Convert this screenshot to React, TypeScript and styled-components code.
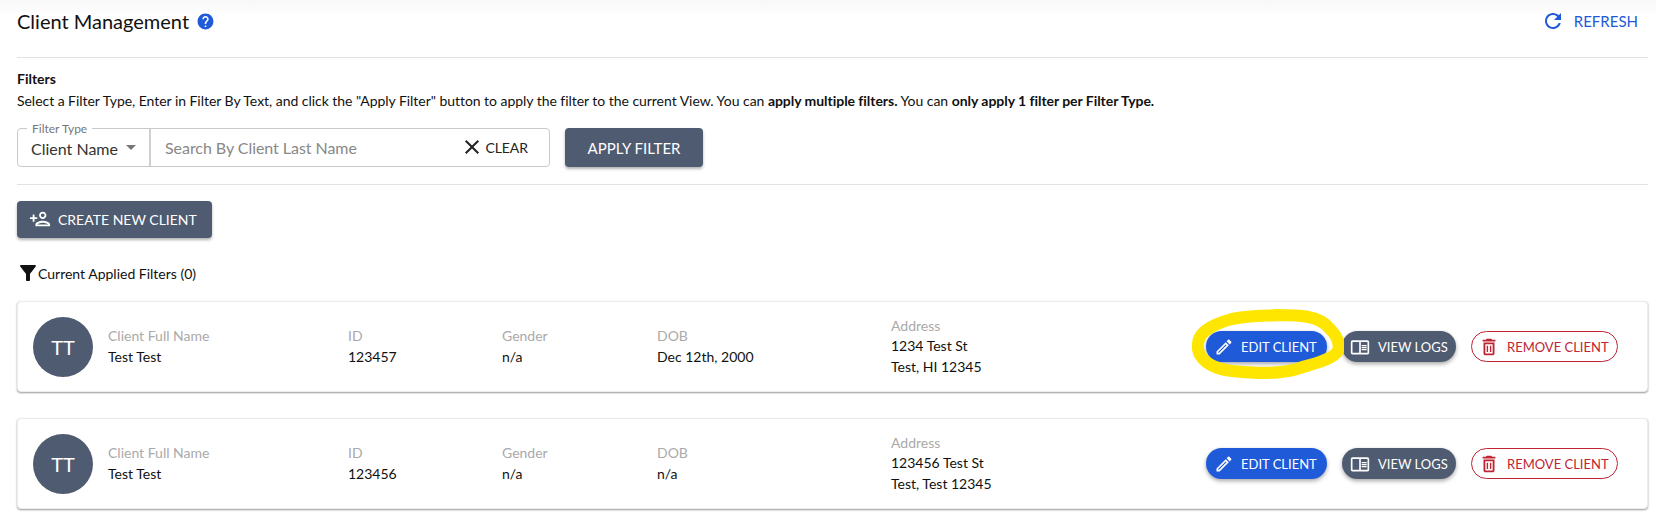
import React from "react"
import styled, { createGlobalStyle, css } from "styled-components"

const DARK = "#4f5b70"
const BLUE = "#1f5ad8"
const RED = "#bf2433"

const GlobalStyle = createGlobalStyle`
  html, body {
    margin: 0;
    padding: 0;
    background: #fff;
  }
  body {
    font-family: "Lato", "Liberation Sans", sans-serif;
    color: #111;
    overflow: hidden;
  }
  * {
    box-sizing: border-box;
  }
`

const Page = styled.div`
  width: 1656px;
  height: 528px;
  padding: 0 8px 0 17px;
  overflow: hidden;
  background: linear-gradient(#f8f8f8 0, #fbfbfb 8px, #fff 14px);
`

const Header = styled.header`
  height: 58px;
  padding-bottom: 15px;
  display: flex;
  align-items: center;
  justify-content: space-between;
  border-bottom: 1px solid #e2e2e2;
`

const TitleRow = styled.div`
  display: flex;
  align-items: center;
  gap: 7px;
  color: ${BLUE};
`

const Title = styled.h1`
  margin: 0;
  font-size: 20px;
  font-weight: 400;
  line-height: 26px;
  color: #111;
`

const RefreshButton = styled.button`
  display: flex;
  align-items: center;
  gap: 9px;
  padding: 0 10px 0 0;
  border: none;
  background: none;
  font: inherit;
  font-size: 15px;
  color: ${BLUE};
`

const Icon = styled.svg<{ $size?: number; $flip?: boolean }>`
  width: ${(p) => p.$size ?? 18}px;
  height: ${(p) => p.$size ?? 18}px;
  flex: none;
  fill: currentColor;
  ${(p) => p.$flip && "transform: scaleX(-1);"}
`

const FilterSection = styled.section`
  height: 127px;
  padding-top: 12px;
  border-bottom: 1px solid #e2e2e2;
`

const SectionTitle = styled.h2`
  margin: 0;
  font-size: 14px;
  font-weight: 700;
  line-height: 18px;
`

const Description = styled.p`
  margin: 4px 0 0;
  font-size: 14px;
  line-height: 18px;
  letter-spacing: -0.04px;
  white-space: nowrap;
  b {
    font-weight: 700;
  }
`

const FilterRow = styled.div`
  display: flex;
  gap: 15px;
  margin-top: 18px;
`

const FilterBox = styled.div`
  position: relative;
  display: flex;
  width: 533px;
  height: 39px;
  border: 1px solid #c9c9c9;
  border-radius: 4px;
`

const FilterLegend = styled.span`
  position: absolute;
  top: -7px;
  left: 9px;
  padding: 0 5px;
  background: #fff;
  font-size: 12px;
  line-height: 13px;
  color: #777;
`

const SelectField = styled.div`
  display: flex;
  align-items: center;
  gap: 8px;
  width: 133px;
  padding: 2px 0 0 13px;
  border-right: 2px solid #d0d0d0;
  font-size: 16px;
  color: #333;
`

const Caret = styled.span`
  width: 0;
  height: 0;
  margin-top: -2px;
  border-left: 5px solid transparent;
  border-right: 5px solid transparent;
  border-top: 5px solid #777;
`

const SearchField = styled.div`
  flex: 1;
  display: flex;
  align-items: center;
  justify-content: space-between;
  padding: 0 21px 1px 14px;
  font-size: 16px;
  letter-spacing: -0.05px;
  color: #888;
`

const ClearButton = styled.span`
  display: flex;
  align-items: center;
  gap: 1px;
  font-size: 14px;
  color: #222;
`

const SquareButton = styled.button`
  display: flex;
  align-items: center;
  justify-content: center;
  width: 138px;
  height: 39px;
  padding: 0;
  border: none;
  border-radius: 4px;
  background: ${DARK};
  color: #fff;
  font: inherit;
  font-size: 15px;
  box-shadow: 0 2px 3px rgba(0, 0, 0, 0.3);
`

const CreateButton = styled(SquareButton)`
  gap: 7px;
  width: 195px;
  height: 37px;
  padding: 0 0 1px 12px;
  font-size: 14px;
  margin-top: 16px;
  justify-content: flex-start;
`

const AppliedFilters = styled.div`
  display: flex;
  align-items: center;
  height: 20px;
  margin: 25px 0 18px -1px;
  font-size: 14px;
  svg {
    margin-right: -2px;
  }
`

const CardList = styled.div`
  display: flex;
  flex-direction: column;
  gap: 26px;
`

const Card = styled.article`
  display: flex;
  align-items: center;
  height: 91px;
  padding: 0 29px 0 15px;
  border: 1px solid #ececec;
  border-radius: 4px;
  box-shadow: 0 1px 2px rgba(0, 0, 0, 0.4);
  background: #fff;
`

const Avatar = styled.div`
  display: flex;
  align-items: center;
  justify-content: center;
  width: 60px;
  height: 60px;
  margin-right: 15px;
  flex: none;
  border-radius: 50%;
  background: ${DARK};
  color: #fff;
  font-size: 20px;
`

const Column = styled.div<{ $width: number }>`
  width: ${(p) => p.$width}px;
  flex: none;
  font-size: 14px;
  line-height: 20.5px;
`

const Label = styled.div`
  color: #aaa;
`

const Value = styled.div`
  color: #111;
`

const Actions = styled.div`
  display: flex;
  gap: 15px;
  margin-left: auto;
`

const pillBase = css`
  display: flex;
  align-items: center;
  height: 31px;
  padding: 0;
  border-radius: 16px;
  font: inherit;
  font-size: 13px;
  white-space: nowrap;
`

const EditWrap = styled.div`
  position: relative;
`

const EditButton = styled.button`
  ${pillBase}
  gap: 7px;
  width: 121px;
  padding-left: 8px;
  border: none;
  background: ${BLUE};
  color: #fff;
  box-shadow: 0 2px 4px rgba(0, 0, 0, 0.35);
`

const LogsButton = styled.button`
  ${pillBase}
  gap: 8px;
  width: 114px;
  padding-left: 8px;
  border: none;
  background: ${DARK};
  color: #fff;
  box-shadow: 0 2px 4px rgba(0, 0, 0, 0.35);
`

const RemoveButton = styled.button`
  ${pillBase}
  gap: 7px;
  width: 147px;
  padding-left: 6px;
  border: 1px solid ${RED};
  background: #fff;
  color: ${RED};
`

const Highlight = styled.svg`
  position: absolute;
  top: -22px;
  left: -14px;
  width: 152px;
  height: 71px;
  fill: none;
  stroke: #ffe600;
  stroke-width: 12;
  pointer-events: none;
`

const paths = {
  help: "M12 2C6.48 2 2 6.48 2 12s4.48 10 10 10 10-4.48 10-10S17.52 2 12 2zm1 17h-2v-2h2v2zm2.07-7.75l-.9.92C13.45 12.9 13 13.5 13 15h-2v-.5c0-1.1.45-2.1 1.17-2.83l1.24-1.26c.37-.36.59-.86.59-1.41 0-1.1-.9-2-2-2s-2 .9-2 2H8c0-2.21 1.79-4 4-4s4 1.79 4 4c0 .88-.36 1.68-.93 2.25z",
  refresh: "M17.65 6.35C16.2 4.9 14.21 4 12 4c-4.42 0-7.99 3.58-7.99 8s3.57 8 7.99 8c3.73 0 6.84-2.55 7.73-6h-2.08c-.82 2.33-3.04 4-5.65 4-3.31 0-6-2.69-6-6s2.69-6 6-6c1.66 0 3.14.69 4.22 1.78L13 11h7V4l-2.35 2.35z",
  close: "M19 6.41L17.59 5 12 10.59 6.41 5 5 6.41 10.59 12 5 17.59 6.41 19 12 13.41 17.59 19 19 17.59 13.41 12z",
  personAdd: "M13 8c0-2.21-1.79-4-4-4S5 5.79 5 8s1.79 4 4 4 4-1.79 4-4zm-2 0c0 1.1-.9 2-2 2s-2-.9-2-2 .9-2 2-2 2 .9 2 2zM1 18v2h16v-2c0-2.66-5.33-4-8-4s-8 1.34-8 4zm2 0c.2-.71 3.3-2 6-2 2.69 0 5.78 1.28 6 2H3zm17-3v-3h3v-2h-3V7h-2v3h-3v2h3v3h2z",
  funnel: "M4.25 5.61C6.27 8.2 10 13 10 13v6c0 .55.45 1 1 1h2c.55 0 1-.45 1-1v-6s3.72-4.8 5.74-7.39C20.25 4.95 19.78 4 18.95 4H5.04c-.83 0-1.3.95-.79 1.61z",
  edit: "M14.06 9.02l.92.92L5.92 19H5v-.92l9.06-9.06M17.66 3c-.25 0-.51.1-.7.29l-1.83 1.83 3.75 3.75 1.83-1.83c.39-.39.39-1.02 0-1.41l-2.34-2.34c-.2-.2-.45-.29-.71-.29zm-3.6 3.19L3 17.25V21h3.75L17.81 9.94l-3.75-3.75z",
  reader: "M21 4H3c-1.1 0-2 .9-2 2v13c0 1.1.9 2 2 2h18c1.1 0 2-.9 2-2V6c0-1.1-.9-2-2-2zM3 19V6h8v13H3zm18 0h-8V6h8v13zm-7-9.5h6V11h-6zm0 2.5h6v1.5h-6zm0 2.5h6V16h-6z",
  trash: "M6 19c0 1.1.9 2 2 2h8c1.1 0 2-.9 2-2V7H6v12zM8 9h8v10H8V9zm7.5-5l-1-1h-5l-1 1H5v2h14V4zM9.5 10.5h1.5v7H9.5zM13 10.5h1.5v7H13z",
}

const Glyph = ({ d, size, flip }: { d: string; size?: number; flip?: boolean }) => (
  <Icon viewBox="0 0 24 24" $size={size} $flip={flip} aria-hidden="true">
    <path d={d} />
  </Icon>
)

interface IClient {
  id: string
  dob: string
  address: string[]
  highlighted?: boolean
}

const clients: IClient[] = [
  { id: "123457", dob: "Dec 12th, 2000", address: ["1234 Test St", "Test, HI 12345"], highlighted: true },
  { id: "123456", dob: "n/a", address: ["123456 Test St", "Test, Test 12345"] },
]

const ClientCard = ({ client }: { client: IClient }) => (
  <Card>
    <Avatar>TT</Avatar>
    <Column $width={240}>
      <Label>Client Full Name</Label>
      <Value>Test Test</Value>
    </Column>
    <Column $width={154}>
      <Label>ID</Label>
      <Value>{client.id}</Value>
    </Column>
    <Column $width={155}>
      <Label>Gender</Label>
      <Value>n/a</Value>
    </Column>
    <Column $width={234}>
      <Label>DOB</Label>
      <Value>{client.dob}</Value>
    </Column>
    <Column $width={200}>
      <Label>Address</Label>
      {client.address.map((line) => (
        <Value key={line}>{line}</Value>
      ))}
    </Column>
    <Actions>
      <EditWrap>
        <EditButton>
          <Glyph d={paths.edit} size={20} />
          EDIT CLIENT
        </EditButton>
        {client.highlighted && (
          <Highlight viewBox="0 0 152 71" aria-hidden="true">
            <path d="M6 35C6 22 25 14 40 10C60 6 80 7 85 6C105 6 128 6 138 20C146 28 148 35 146 42C140 52 115 56 105 60C85 66 60 64 40 62C20 60 4 50 6 35Z" />
          </Highlight>
        )}
      </EditWrap>
      <LogsButton>
        <Glyph d={paths.reader} size={20} />
        VIEW LOGS
      </LogsButton>
      <RemoveButton>
        <Glyph d={paths.trash} size={22} />
        REMOVE CLIENT
      </RemoveButton>
    </Actions>
  </Card>
)

export default function App() {
  return (
    <Page>
      <GlobalStyle />
      <Header>
        <TitleRow>
          <Title>Client Management</Title>
          <Glyph d={paths.help} size={19} />
        </TitleRow>
        <RefreshButton>
          <Glyph d={paths.refresh} size={24} />
          REFRESH
        </RefreshButton>
      </Header>
      <FilterSection>
        <SectionTitle>Filters</SectionTitle>
        <Description>
          Select a Filter Type, Enter in Filter By Text, and click the "Apply Filter" button to apply the filter to the
          current View. You can <b>apply multiple filters.</b> You can <b>only apply 1 filter per Filter Type.</b>
        </Description>
        <FilterRow>
          <FilterBox>
            <FilterLegend>Filter Type</FilterLegend>
            <SelectField>
              Client Name
              <Caret />
            </SelectField>
            <SearchField>
              Search By Client Last Name
              <ClearButton>
                <Glyph d={paths.close} size={24} />
                CLEAR
              </ClearButton>
            </SearchField>
          </FilterBox>
          <SquareButton>APPLY FILTER</SquareButton>
        </FilterRow>
      </FilterSection>
      <CreateButton>
        <Glyph d={paths.personAdd} size={22} flip />
        CREATE NEW CLIENT
      </CreateButton>
      <AppliedFilters>
        <Glyph d={paths.funnel} size={24} />
        Current Applied Filters (0)
      </AppliedFilters>
      <CardList>
        {clients.map((client) => (
          <ClientCard key={client.id} client={client} />
        ))}
      </CardList>
    </Page>
  )
}
